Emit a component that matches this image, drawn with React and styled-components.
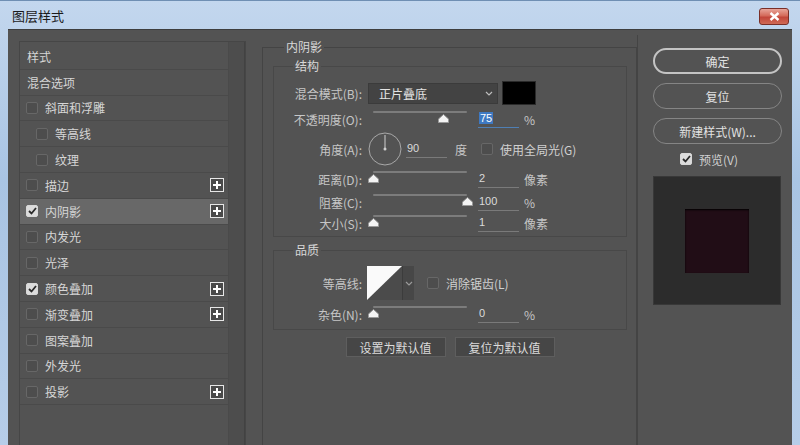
import React from 'react'
import styled, { createGlobalStyle } from 'styled-components'

const styles = [
  { label: '样式', plain: true },
  { label: '混合选项', plain: true },
  { label: '斜面和浮雕' },
  { label: '等高线', indent: true },
  { label: '纹理', indent: true },
  { label: '描边', plus: true },
  { label: '内阴影', checked: true, plus: true, active: true },
  { label: '内发光' },
  { label: '光泽' },
  { label: '颜色叠加', checked: true, plus: true },
  { label: '渐变叠加', plus: true },
  { label: '图案叠加' },
  { label: '外发光' },
  { label: '投影', plus: true },
]

const GlobalStyle = createGlobalStyle`
  html, body {
    margin: 0;
    padding: 0;
    background: #aec8e5;
  }
  body {
    font-family: "Noto Sans CJK SC", "Liberation Sans", sans-serif;
    overflow: hidden;
  }
  * { box-sizing: border-box; }
`

const Window = styled.div`
  width: 800px;
  height: 445px;
  display: flex;
  flex-direction: column;
  background: linear-gradient(180deg, #c3d7ee 0%, #a9c4e3 40%, #b6cde8 100%);
  border-top: 1px solid #6f8fb3;
  overflow: hidden;
`

const TitleBar = styled.div`
  height: 28px;
  flex: none;
  display: flex;
  align-items: center;
  justify-content: space-between;
  padding: 0 11px 0 12px;
  color: #1b1b1b;
  font-size: 13px;
`

const CloseButton = styled.div`
  width: 30px;
  height: 17px;
  margin-top: 2px;
  border: 1px solid #7a2f27;
  border-radius: 3px;
  background: linear-gradient(180deg, #e8a59a 0%, #d46a5a 45%, #c2463a 55%, #cf6a55 100%);
  display: flex;
  align-items: center;
  justify-content: center;
`

const Body = styled.div`
  flex: 1;
  margin: 0 8px;
  background: #535353;
  border-top: 1px solid #3e3e3e;
  display: flex;
  min-height: 0;
  font-size: 12px;
`

const LeftPanel = styled.div`
  padding: 11px 0 0 11px;
  width: 254px;
  flex: none;
  display: flex;
`

const ListBox = styled.div`
  width: 227px;
  border: 1px solid #464646;
  border-bottom: none;
  display: flex;
`

const List = styled.div`
  flex: 1;
  padding-top: 2px;
  background: #535353;
`

const ScrollTrack = styled.div`
  width: 17px;
  background: #4d4d4d;
  border-left: 1px solid #4a4a4a;
  border-right: 1px solid #424242;
`

const Row = styled.div`
  height: 25.8px;
  display: flex;
  align-items: center;
  padding-left: ${p => (p.$plain ? 7 : 6) + (p.$indent ? 10 : 0)}px;
  padding-right: 4px;
  background: ${p => (p.$active ? '#686868' : '#535353')};
  border-bottom: 1px solid #4a4a4a;
  color: #d6d6d6;
  font-size: 12px;
`

const RowLabel = styled.span`
  flex: 1;
  margin-left: ${p => (p.$plain ? 0 : 7)}px;
`

const Check = styled.div`
  width: 12px;
  height: 12px;
  flex: none;
  border-radius: 2px;
  border: 1px solid ${p => (p.$checked ? '#d8d8d8' : '#676767')};
  background: ${p => (p.$checked ? '#dcdcdc' : '#4d4d4d')};
  display: flex;
  align-items: center;
  justify-content: center;
`

const PlusBox = styled.div`
  width: 14px;
  height: 14px;
  border: 1px solid #e6e6e6;
  background: #4a4a4a;
  display: flex;
  align-items: center;
  justify-content: center;
`

const Middle = styled.div`
  width: 375px;
  flex: none;
  padding-top: 11px;
`

const Group = styled.fieldset`
  margin: 0;
  padding: ${p => p.$pad || '0'};
  border: 1px solid ${p => (p.$outer ? '#444' : '#484848')};
  border-bottom: ${p => (p.$outer ? 'none' : '1px solid #484848')};
  height: ${p => p.$h || 'auto'};
  min-width: 0;
`

const Legend = styled.legend`
  padding: 0 2px;
  margin-left: ${p => p.$ml || 20}px;
  color: #d8d8d8;
  font-size: 12px;
  line-height: 12px;
  height: 12px;
`

const InnerGroup = styled(Group)`
  margin: ${p => p.$mt || 0}px 9px 0 10px;
`

const FieldRow = styled.div`
  height: ${p => p.$h}px;
  display: flex;
  align-items: center;
  color: #c6c6c6;
  font-size: 12px;
`

const FieldLabel = styled.div`
  width: 88px;
  text-align: right;
  flex: none;
  white-space: nowrap;
`

const Select = styled.div`
  width: 130px;
  height: 21px;
  margin-left: 6px;
  background: #434343;
  border: 1px solid #3b3b3b;
  display: flex;
  align-items: center;
  justify-content: space-between;
  padding: 0 4px 0 10px;
  color: #e4e4e4;
`

const Swatch = styled.div`
  width: 34px;
  height: 24px;
  margin-left: 4px;
  background: #000;
  border: 1px solid #2a2a2a;
`

const SliderWrap = styled.div`
  width: 94px;
  height: 14px;
  margin-left: 11px;
  margin-top: -3px;
  position: relative;
  flex: none;
`

const Track = styled.div`
  height: 2px;
  background: #7c7c7c;
  border-radius: 1px;
`

const Thumb = styled.svg`
  position: absolute;
  top: 3px;
  width: 11px;
  height: 9px;
`

const ValueField = styled.div`
  width: 41px;
  margin-left: ${p => p.$ml || 11}px;
  border-bottom: 1px solid ${p => (p.$focus ? '#4f7fb4' : '#7a7a7a')};
  height: 17px;
  color: #dadada;
  font-size: 11px;
  line-height: 15px;
  font-family: "Liberation Sans", sans-serif;
  padding-left: 1px;
  flex: none;
`

const Selected = styled.span`
  background: #3e79c2;
  color: #fff;
  padding: 0 1px;
`

const Unit = styled.span`
  margin-left: ${p => p.$ml || 5}px;
  color: #c6c6c6;
`

const Dial = styled.svg`
  width: 34px;
  height: 34px;
  margin-left: 6px;
  flex: none;
`

const InlineCheck = styled.label`
  display: flex;
  align-items: center;
  gap: 7px;
  margin-left: ${p => p.$ml || 0}px;
  color: #d0d0d0;
  font-size: 12px;
`

const ContourPicker = styled.div`
  margin-left: 5px;
  display: flex;
  height: 34px;
`

const ContourBox = styled.svg`
  width: 35px;
  height: 34px;
  display: block;
`

const ContourArrow = styled.div`
  width: 12px;
  background: #474747;
  border-left: 1px solid #3c3c3c;
  display: flex;
  align-items: center;
  justify-content: center;
`

const DefaultsBar = styled.div`
  display: flex;
  justify-content: center;
  gap: 9px;
  margin-top: 7px;
  padding-left: 1px;
`

const FlatButton = styled.div`
  width: 100px;
  height: 20px;
  background: #464646;
  border: 1px solid #5e5e5e;
  color: #dadada;
  font-size: 12px;
  display: flex;
  align-items: center;
  justify-content: center;
`

const RightPanel = styled.div`
  flex: 1;
  border-left: 1px solid #444;
  padding: 13px 0 0 15px;
  display: flex;
  flex-direction: column;
  margin-top: 5px;
`

const PillButton = styled.div`
  width: 129px;
  height: 26px;
  border-radius: 13px;
  border: ${p => (p.$primary ? '2px solid #c4c4c4' : '1px solid #858585')};
  color: #e2e2e2;
  font-size: 12px;
  display: flex;
  align-items: center;
  justify-content: center;
  margin-bottom: 9px;
`

const PreviewCheck = styled(InlineCheck)`
  margin: -2px 0 0 27px;
  height: 16px;
`

const PreviewBox = styled.div`
  width: 128px;
  height: 129px;
  margin-top: 9px;
  background: #2c2c2c;
  border: 1px solid #383838;
  display: flex;
  align-items: center;
  justify-content: center;
`

const PreviewSquare = styled.div`
  width: 64px;
  height: 64px;
  background: #210d16;
  box-shadow: inset 0 1px 2px #000, 0 0 1px #3a2a30;
`

const Checkmark = () => (
  <svg width="9" height="8" viewBox="0 0 9 8">
    <path d="M1 4 L3.5 6.5 L8 1" fill="none" stroke="#2a2a2a" strokeWidth="1.8" />
  </svg>
)

const Slider = ({ value }) => (
  <SliderWrap>
    <Track />
    <Thumb viewBox="0 0 11 9" style={{ left: `${value * 94 - 5.5}px` }}>
      <path d="M5.5 0.5 L10.5 5 L10.5 8.5 L0.5 8.5 L0.5 5 Z" fill="#f4f4f4" stroke="#9a9a9a" strokeWidth="1" />
    </Thumb>
  </SliderWrap>
)

const Chevron = ({ color = '#bdbdbd' }) => (
  <svg width="8" height="5" viewBox="0 0 8 5">
    <path d="M1 1 L4 4 L7 1" fill="none" stroke={color} strokeWidth="1.2" />
  </svg>
)

export default function App() {
  return (
    <Window>
      <GlobalStyle />
      <TitleBar>
        <span>图层样式</span>
        <CloseButton>
          <svg width="11" height="9" viewBox="0 0 11 9">
            <path d="M1.5 1 L9.5 8 M9.5 1 L1.5 8" stroke="#fff" strokeWidth="2.4" />
          </svg>
        </CloseButton>
      </TitleBar>
      <Body>
        <LeftPanel>
          <ListBox>
            <List>
              {styles.map(s => (
                <Row key={s.label} $plain={s.plain} $indent={s.indent} $active={s.active}>
                  {!s.plain && <Check $checked={s.checked}>{s.checked && <Checkmark />}</Check>}
                  <RowLabel $plain={s.plain}>{s.label}</RowLabel>
                  {s.plus && (
                    <PlusBox>
                      <svg width="10" height="10" viewBox="0 0 10 10">
                        <path d="M5 1 V9 M1 5 H9" stroke="#fff" strokeWidth="2" />
                      </svg>
                    </PlusBox>
                  )}
                </Row>
              ))}
            </List>
            <ScrollTrack />
          </ListBox>
        </LeftPanel>

        <Middle>
          <Group $outer $pad="0" $h="420px">
            <Legend $ml={21}>内阴影</Legend>
            <InnerGroup $mt={7} $pad="8px 0 2px 0">
              <Legend $ml={19}>结构</Legend>
              <FieldRow $h={26}>
                <FieldLabel>混合模式(B):</FieldLabel>
                <Select>
                  <span>正片叠底</span>
                  <Chevron />
                </Select>
                <Swatch />
              </FieldRow>
              <FieldRow $h={26}>
                <FieldLabel>不透明度(O):</FieldLabel>
                <Slider value={0.745} />
                <ValueField $focus><Selected>75</Selected></ValueField>
                <Unit>%</Unit>
              </FieldRow>
              <FieldRow $h={34}>
                <FieldLabel>角度(A):</FieldLabel>
                <Dial viewBox="0 0 34 34">
                  <circle cx="17" cy="17" r="16" fill="none" stroke="#a8a8a8" strokeWidth="1" />
                  <path d="M17 17 V3" stroke="#d0d0d0" strokeWidth="1" />
                  <circle cx="17" cy="17" r="1.5" fill="#d0d0d0" />
                </Dial>
                <ValueField $ml={4}>90</ValueField>
                <Unit $ml={8}>度</Unit>
                <InlineCheck $ml={14}>
                  <Check />
                  <span>使用全局光(G)</span>
                </InlineCheck>
              </FieldRow>
              <FieldRow $h={26}>
                <FieldLabel>距离(D):</FieldLabel>
                <Slider value={0.01} />
                <ValueField>2</ValueField>
                <Unit>像素</Unit>
              </FieldRow>
              <FieldRow $h={21}>
                <FieldLabel>阻塞(C):</FieldLabel>
                <Slider value={1} />
                <ValueField>100</ValueField>
                <Unit>%</Unit>
              </FieldRow>
              <FieldRow $h={21}>
                <FieldLabel>大小(S):</FieldLabel>
                <Slider value={0.01} />
                <ValueField>1</ValueField>
                <Unit>像素</Unit>
              </FieldRow>
            </InnerGroup>
            <InnerGroup $mt={7} $pad="8px 0 3px 0">
              <Legend $ml={19}>品质</Legend>
              <FieldRow $h={38}>
                <FieldLabel>等高线:</FieldLabel>
                <ContourPicker>
                  <ContourBox viewBox="0 0 35 34">
                    <rect width="35" height="34" fill="#4b4b4b" />
                    <path d="M0 0 H35 L0 34 Z" fill="#fafafa" />
                  </ContourBox>
                  <ContourArrow><Chevron color="#9a9a9a" /></ContourArrow>
                </ContourPicker>
                <InlineCheck $ml={13}>
                  <Check />
                  <span>消除锯齿(L)</span>
                </InlineCheck>
              </FieldRow>
              <FieldRow $h={24}>
                <FieldLabel>杂色(N):</FieldLabel>
                <Slider value={0} />
                <ValueField>0</ValueField>
                <Unit>%</Unit>
              </FieldRow>
            </InnerGroup>
            <DefaultsBar>
              <FlatButton>设置为默认值</FlatButton>
              <FlatButton>复位为默认值</FlatButton>
            </DefaultsBar>
          </Group>
        </Middle>

        <RightPanel>
          <PillButton $primary>确定</PillButton>
          <PillButton>复位</PillButton>
          <PillButton>新建样式(W)...</PillButton>
          <PreviewCheck>
            <Check $checked><Checkmark /></Check>
            <span>预览(V)</span>
          </PreviewCheck>
          <PreviewBox>
            <PreviewSquare />
          </PreviewBox>
        </RightPanel>
      </Body>
    </Window>
  )
}
